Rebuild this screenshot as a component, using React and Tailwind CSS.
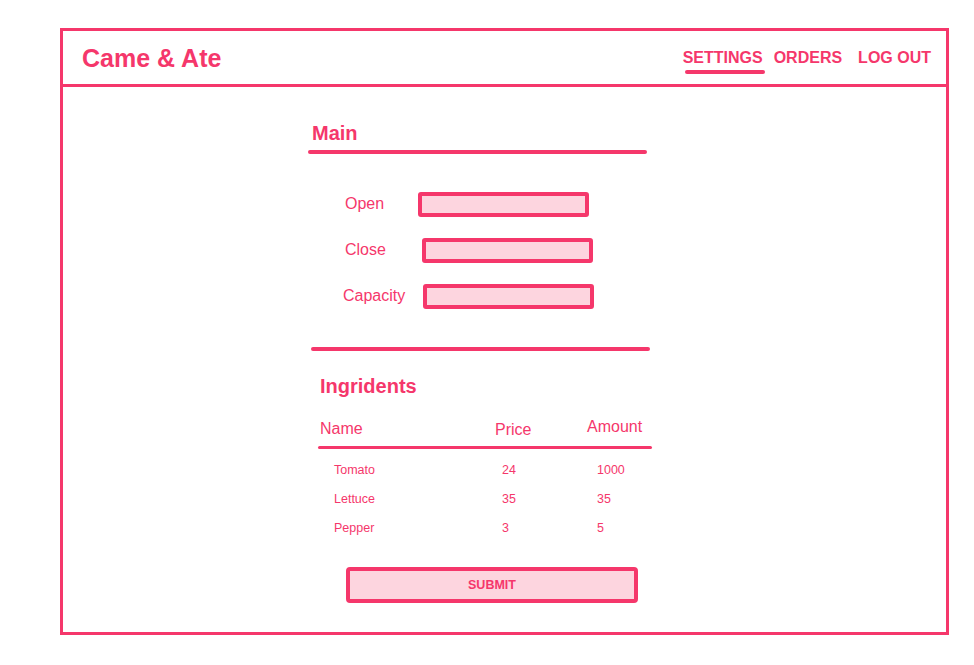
const pink = "border-[#f5376b]";

const rows = [
  { name: "Tomato", price: "24", amount: "1000" },
  { name: "Lettuce", price: "35", amount: "35" },
  { name: "Pepper", price: "3", amount: "5" }
];

function Field({ label, labelClass }) {
  return (
    <div className="flex h-[26px] items-center">
      <span className={`text-[16px] leading-5 ${labelClass}`}>{label}</span>
      <div className={`h-[25px] w-[171px] rounded-[3px] border-[4px] ${pink} bg-[#fdd5df]`} />
    </div>
  );
}

export default function App() {
  return (
    <div
      className="min-h-[665px] bg-white pt-[28px] text-[#f5376b]"
      style={{ fontFamily: '"Liberation Sans", Arial, sans-serif' }}
    >
      <div className={`ml-[60px] flex h-[607px] w-[889px] flex-col border-[3px] ${pink}`}>
        <header className={`flex h-[56px] shrink-0 items-center justify-between border-b-[3px] ${pink} pl-[19px] pr-[15px]`}>
          <span className="text-[25px] font-bold leading-7">Came &amp; Ate</span>
          <nav className="flex items-center text-[16px] font-bold leading-5">
            <span className="relative">
              SETTINGS
              <span className="absolute left-[2px] top-[22px] h-[4px] w-[80px] rounded-full bg-[#f5376b]" />
            </span>
            <span className="ml-[11px]">ORDERS</span>
            <span className="ml-[16px]">LOG OUT</span>
          </nav>
        </header>

        <div className="ml-[245px] flex w-[345px] flex-col pt-[34px]">
          <h2 className="ml-[4px] text-[20px] font-bold leading-6">Main</h2>
          <div className="mt-[5px] h-[4px] w-[339px] rounded-full bg-[#f5376b]" />

          <div className="mt-[37px] flex flex-col gap-[20px] pl-[37px]">
            <Field label="Open" labelClass="w-[73px]" />
            <Field label="Close" labelClass="w-[77px]" />
            <Field label="Capacity" labelClass="-ml-[2px] w-[80px]" />
          </div>

          <div className="ml-[3px] mt-[38px] h-[4px] w-[339px] rounded-full bg-[#f5376b]" />

          <h2 className="ml-[12px] mt-[23px] text-[20px] font-bold leading-6">Ingridents</h2>

          <div className="ml-[12px] mt-[21px] flex text-[16px] leading-5">
            <span className="w-[175px]">Name</span>
            <span className="w-[92px] pt-[1px]">Price</span>
            <span className="-mt-[2px]">Amount</span>
          </div>
          <div className="ml-[10px] mt-[6px] h-[3px] w-[334px] rounded-full bg-[#f5376b]" />

          <div className="mt-[13px] flex flex-col gap-[13px] pl-[26px] text-[12.5px] leading-4">
            {rows.map((r) => (
              <div key={r.name} className="flex">
                <span className="w-[168px]">{r.name}</span>
                <span className="w-[95px]">{r.price}</span>
                <span>{r.amount}</span>
              </div>
            ))}
          </div>

          <button
            type="button"
            className={`ml-[38px] mt-[31px] flex h-[36px] w-[292px] items-center justify-center rounded-[4px] border-[4px] ${pink} bg-[#fdd5df] text-[12.5px] font-bold`}
          >
            SUBMIT
          </button>
        </div>
      </div>
    </div>
  );
}
